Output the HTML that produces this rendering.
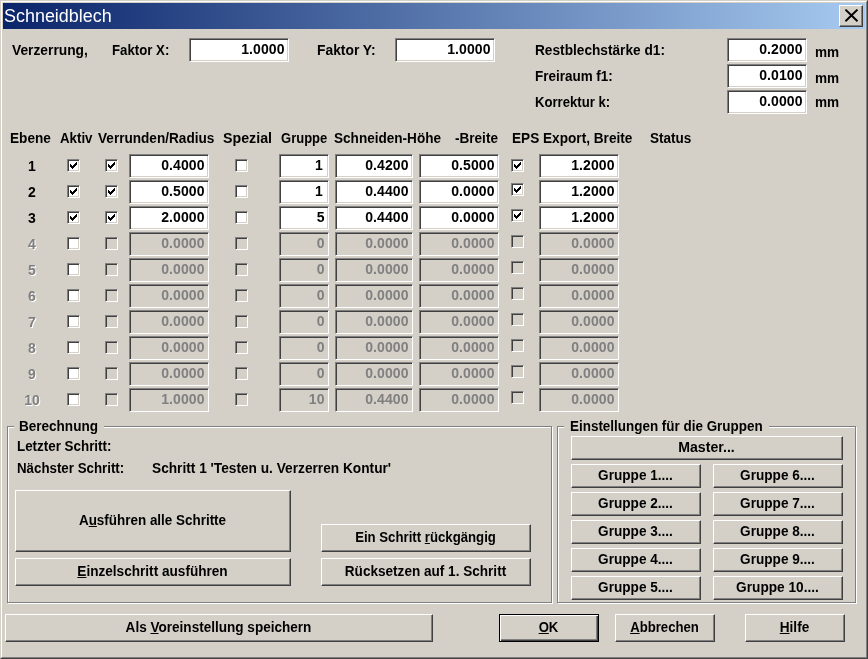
<!DOCTYPE html>
<html lang="de">
<head>
<meta charset="utf-8">
<title>Schneidblech</title>
<style>
html,body{margin:0;padding:0;}
body{width:868px;height:659px;overflow:hidden;background:#d4d0c8;position:relative;font-family:"Liberation Sans",sans-serif;font-weight:bold;font-size:14px;color:#000;}
#win{position:absolute;left:0;top:0;width:868px;height:659px;box-sizing:border-box;background:#d4d0c8;
 border-top:1px solid #d4d0c8;border-left:1px solid #d4d0c8;border-right:1px solid #404040;border-bottom:1px solid #404040;}
#win2{position:absolute;left:1px;top:1px;width:866px;height:657px;box-sizing:border-box;
 border-top:1px solid #fff;border-left:1px solid #fff;border-right:1px solid #808080;border-bottom:1px solid #808080;}
#fg{position:absolute;left:0;top:0;width:868px;height:659px;will-change:transform}
#title{position:absolute;left:3px;top:3px;width:862px;height:26px;background:linear-gradient(to right,#0a246a,#a6caf0);}
#title span{position:absolute;left:0.8px;top:2px;font-weight:normal;font-size:17.5px;line-height:22px;color:#fff;transform:scaleX(1.025);transform-origin:0 0}
#close{position:absolute;left:839px;top:5px;width:24px;height:22px;box-sizing:border-box;background:#d4d0c8;
 border-top:1px solid #fff;border-left:1px solid #fff;border-right:1px solid #404040;border-bottom:1px solid #404040;box-shadow:inset -1px -1px 0 #808080;}
#close svg{position:absolute;left:5px;top:3px}
.t{position:absolute;white-space:nowrap;line-height:16px;height:16px;transform-origin:0 0}
.num{text-align:center}
.dt{color:#808080;text-shadow:1px 1px 0 #fff}
.in{position:absolute;box-sizing:border-box;background:#fff;border-top:1px solid #808080;border-left:1px solid #808080;border-right:1px solid #fff;border-bottom:1px solid #fff;
 box-shadow:inset 1px 1px 0 #404040, inset -1px -1px 0 #d4d0c8;}
.in span{position:absolute;right:3.4px;top:2px;line-height:16px;letter-spacing:0.1px}
.in.dis{background:#d4d0c8}
.in.dis span{color:#808080}
.cb{position:absolute;width:13px;height:13px;box-sizing:border-box;background:#fff;border-top:1px solid #808080;border-left:1px solid #808080;border-right:1px solid #fff;border-bottom:1px solid #fff;
 box-shadow:inset 1px 1px 0 #404040, inset -1px -1px 0 #d4d0c8;}
.cb.dis{background:#d4d0c8}
.cb svg{position:absolute;left:2px;top:2px;overflow:visible}
.btn{position:absolute;box-sizing:border-box;background:#d4d0c8;border-top:1px solid #fff;border-left:1px solid #fff;border-right:1px solid #404040;border-bottom:1px solid #404040;
 box-shadow:inset -1px -1px 0 #808080;text-align:center;}
.btn span{position:absolute;left:-1px;right:0;top:50%;margin-top:-9px;line-height:16px;white-space:nowrap}
.btn.def{border:1px solid #000;box-shadow:inset 1px 1px 0 #fff, inset -1px -1px 0 #404040, inset -2px -2px 0 #808080}
.btn.def span{left:-2px;right:-1px}
.gb{position:absolute;box-sizing:border-box;border:1px solid #808080;box-shadow:inset 1px 1px 0 #fff, 1px 1px 0 #fff;}
.gap{position:absolute;height:2px;background:#d4d0c8}
u{text-decoration:underline;text-underline-offset:1px}
</style>
</head>
<body>
<div id="win"></div><div id="win2"></div>
<div id="fg">
<div id="title"><span>Schneidblech</span></div>
<div id="close"><svg width="14" height="14" viewBox="0 0 14 14"><path d="M0.4 0.6L12.5 12.2M12.5 0.6L0.4 12.2" stroke="#000" stroke-width="2" fill="none"/></svg></div>
<div class="t " style="left:12.01px;top:42px;transform:scaleX(0.9850)">Verzerrung,</div>
<div class="t " style="left:111.64px;top:42px;transform:scaleX(0.9444)">Faktor X:</div>
<div class="in" style="left:189px;top:38px;width:100px;height:24px"><span>1.0000</span></div>
<div class="t " style="left:316.51px;top:42px;transform:scaleX(0.9880)">Faktor Y:</div>
<div class="in" style="left:395px;top:38px;width:100px;height:24px"><span>1.0000</span></div>
<div class="t " style="left:534.52px;top:42px;transform:scaleX(0.9767)">Restblechstärke d1:</div>
<div class="t " style="left:534.53px;top:68px;transform:scaleX(0.9619)">Freiraum f1:</div>
<div class="t " style="left:534.55px;top:94px;transform:scaleX(0.9371)">Korrektur k:</div>
<div class="in" style="left:727px;top:38px;width:80px;height:24px"><span>0.2000</span></div>
<div class="in" style="left:727px;top:64px;width:80px;height:24px"><span>0.0100</span></div>
<div class="in" style="left:727px;top:90px;width:80px;height:24px"><span>0.0000</span></div>
<div class="t " style="left:814.62px;top:44px;transform:scaleX(0.9697)">mm</div>
<div class="t " style="left:814.62px;top:70px;transform:scaleX(0.9697)">mm</div>
<div class="t " style="left:814.62px;top:94px;transform:scaleX(0.9697)">mm</div>
<div class="t " style="left:10.22px;top:130px;transform:scaleX(0.9724)">Ebene</div>
<div class="t " style="left:59.64px;top:130px;transform:scaleX(0.9499)">Aktiv</div>
<div class="t " style="left:98.22px;top:130px;transform:scaleX(0.9711)">Verrunden/Radius</div>
<div class="t " style="left:222.69px;top:130px;transform:scaleX(1.0161)">Spezial</div>
<div class="t " style="left:280.56px;top:130px;transform:scaleX(0.9298)">Gruppe</div>
<div class="t " style="left:334.22px;top:130px;transform:scaleX(0.9691)">Schneiden-Höhe</div>
<div class="t " style="left:455.23px;top:130px;transform:scaleX(0.9682)">-Breite</div>
<div class="t " style="left:512.22px;top:130px;transform:scaleX(0.9729)">EPS Export, Breite</div>
<div class="t " style="left:650.33px;top:130px;transform:scaleX(0.9661)">Status</div>
<div class="t num" style="left:12px;width:40px;top:158px">1</div>
<div class="cb" style="left:67px;top:159px"><svg width="7" height="7" viewBox="0 0 7 7"><path shape-rendering="crispEdges" d="M0 2h1v3H0zM1 3h1v3H1zM2 4h1v3H2zM3 3h1v3H3zM4 2h1v3H4zM5 1h1v3H5zM6 0h1v3H6z" fill="#000"/></svg></div>
<div class="cb" style="left:105px;top:159px"><svg width="7" height="7" viewBox="0 0 7 7"><path shape-rendering="crispEdges" d="M0 2h1v3H0zM1 3h1v3H1zM2 4h1v3H2zM3 3h1v3H3zM4 2h1v3H4zM5 1h1v3H5zM6 0h1v3H6z" fill="#000"/></svg></div>
<div class="in" style="left:129px;top:154px;width:80px;height:24px"><span>0.4000</span></div>
<div class="cb" style="left:235px;top:159px"></div>
<div class="in" style="left:279px;top:154px;width:50px;height:24px"><span style="right:5px">1</span></div>
<div class="in" style="left:335px;top:154px;width:78px;height:24px"><span>0.4200</span></div>
<div class="in" style="left:419px;top:154px;width:80px;height:24px"><span>0.5000</span></div>
<div class="cb" style="left:511px;top:159px"><svg width="7" height="7" viewBox="0 0 7 7"><path shape-rendering="crispEdges" d="M0 2h1v3H0zM1 3h1v3H1zM2 4h1v3H2zM3 3h1v3H3zM4 2h1v3H4zM5 1h1v3H5zM6 0h1v3H6z" fill="#000"/></svg></div>
<div class="in" style="left:539px;top:154px;width:80px;height:24px"><span>1.2000</span></div>
<div class="t num" style="left:12px;width:40px;top:184px">2</div>
<div class="cb" style="left:67px;top:185px"><svg width="7" height="7" viewBox="0 0 7 7"><path shape-rendering="crispEdges" d="M0 2h1v3H0zM1 3h1v3H1zM2 4h1v3H2zM3 3h1v3H3zM4 2h1v3H4zM5 1h1v3H5zM6 0h1v3H6z" fill="#000"/></svg></div>
<div class="cb" style="left:105px;top:185px"><svg width="7" height="7" viewBox="0 0 7 7"><path shape-rendering="crispEdges" d="M0 2h1v3H0zM1 3h1v3H1zM2 4h1v3H2zM3 3h1v3H3zM4 2h1v3H4zM5 1h1v3H5zM6 0h1v3H6z" fill="#000"/></svg></div>
<div class="in" style="left:129px;top:180px;width:80px;height:24px"><span>0.5000</span></div>
<div class="cb" style="left:235px;top:185px"></div>
<div class="in" style="left:279px;top:180px;width:50px;height:24px"><span style="right:5px">1</span></div>
<div class="in" style="left:335px;top:180px;width:78px;height:24px"><span>0.4400</span></div>
<div class="in" style="left:419px;top:180px;width:80px;height:24px"><span>0.0000</span></div>
<div class="cb" style="left:511px;top:183px"><svg width="7" height="7" viewBox="0 0 7 7"><path shape-rendering="crispEdges" d="M0 2h1v3H0zM1 3h1v3H1zM2 4h1v3H2zM3 3h1v3H3zM4 2h1v3H4zM5 1h1v3H5zM6 0h1v3H6z" fill="#000"/></svg></div>
<div class="in" style="left:539px;top:180px;width:80px;height:24px"><span>1.2000</span></div>
<div class="t num" style="left:12px;width:40px;top:210px">3</div>
<div class="cb" style="left:67px;top:211px"><svg width="7" height="7" viewBox="0 0 7 7"><path shape-rendering="crispEdges" d="M0 2h1v3H0zM1 3h1v3H1zM2 4h1v3H2zM3 3h1v3H3zM4 2h1v3H4zM5 1h1v3H5zM6 0h1v3H6z" fill="#000"/></svg></div>
<div class="cb" style="left:105px;top:211px"><svg width="7" height="7" viewBox="0 0 7 7"><path shape-rendering="crispEdges" d="M0 2h1v3H0zM1 3h1v3H1zM2 4h1v3H2zM3 3h1v3H3zM4 2h1v3H4zM5 1h1v3H5zM6 0h1v3H6z" fill="#000"/></svg></div>
<div class="in" style="left:129px;top:206px;width:80px;height:24px"><span>2.0000</span></div>
<div class="cb" style="left:235px;top:211px"></div>
<div class="in" style="left:279px;top:206px;width:50px;height:24px"><span>5</span></div>
<div class="in" style="left:335px;top:206px;width:78px;height:24px"><span>0.4400</span></div>
<div class="in" style="left:419px;top:206px;width:80px;height:24px"><span>0.0000</span></div>
<div class="cb" style="left:511px;top:209px"><svg width="7" height="7" viewBox="0 0 7 7"><path shape-rendering="crispEdges" d="M0 2h1v3H0zM1 3h1v3H1zM2 4h1v3H2zM3 3h1v3H3zM4 2h1v3H4zM5 1h1v3H5zM6 0h1v3H6z" fill="#000"/></svg></div>
<div class="in" style="left:539px;top:206px;width:80px;height:24px"><span>1.2000</span></div>
<div class="t num dt" style="left:12px;width:40px;top:236px">4</div>
<div class="cb" style="left:67px;top:237px"></div>
<div class="cb dis" style="left:105px;top:237px"></div>
<div class="in dis" style="left:129px;top:232px;width:80px;height:24px"><span>0.0000</span></div>
<div class="cb dis" style="left:235px;top:237px"></div>
<div class="in dis" style="left:279px;top:232px;width:50px;height:24px"><span>0</span></div>
<div class="in dis" style="left:335px;top:232px;width:78px;height:24px"><span>0.0000</span></div>
<div class="in dis" style="left:419px;top:232px;width:80px;height:24px"><span>0.0000</span></div>
<div class="cb dis" style="left:511px;top:235px"></div>
<div class="in dis" style="left:539px;top:232px;width:80px;height:24px"><span>0.0000</span></div>
<div class="t num dt" style="left:12px;width:40px;top:262px">5</div>
<div class="cb" style="left:67px;top:263px"></div>
<div class="cb dis" style="left:105px;top:263px"></div>
<div class="in dis" style="left:129px;top:258px;width:80px;height:24px"><span>0.0000</span></div>
<div class="cb dis" style="left:235px;top:263px"></div>
<div class="in dis" style="left:279px;top:258px;width:50px;height:24px"><span>0</span></div>
<div class="in dis" style="left:335px;top:258px;width:78px;height:24px"><span>0.0000</span></div>
<div class="in dis" style="left:419px;top:258px;width:80px;height:24px"><span>0.0000</span></div>
<div class="cb dis" style="left:511px;top:261px"></div>
<div class="in dis" style="left:539px;top:258px;width:80px;height:24px"><span>0.0000</span></div>
<div class="t num dt" style="left:12px;width:40px;top:288px">6</div>
<div class="cb" style="left:67px;top:289px"></div>
<div class="cb dis" style="left:105px;top:289px"></div>
<div class="in dis" style="left:129px;top:284px;width:80px;height:24px"><span>0.0000</span></div>
<div class="cb dis" style="left:235px;top:289px"></div>
<div class="in dis" style="left:279px;top:284px;width:50px;height:24px"><span>0</span></div>
<div class="in dis" style="left:335px;top:284px;width:78px;height:24px"><span>0.0000</span></div>
<div class="in dis" style="left:419px;top:284px;width:80px;height:24px"><span>0.0000</span></div>
<div class="cb dis" style="left:511px;top:287px"></div>
<div class="in dis" style="left:539px;top:284px;width:80px;height:24px"><span>0.0000</span></div>
<div class="t num dt" style="left:12px;width:40px;top:314px">7</div>
<div class="cb" style="left:67px;top:315px"></div>
<div class="cb dis" style="left:105px;top:315px"></div>
<div class="in dis" style="left:129px;top:310px;width:80px;height:24px"><span>0.0000</span></div>
<div class="cb dis" style="left:235px;top:315px"></div>
<div class="in dis" style="left:279px;top:310px;width:50px;height:24px"><span>0</span></div>
<div class="in dis" style="left:335px;top:310px;width:78px;height:24px"><span>0.0000</span></div>
<div class="in dis" style="left:419px;top:310px;width:80px;height:24px"><span>0.0000</span></div>
<div class="cb dis" style="left:511px;top:313px"></div>
<div class="in dis" style="left:539px;top:310px;width:80px;height:24px"><span>0.0000</span></div>
<div class="t num dt" style="left:12px;width:40px;top:340px">8</div>
<div class="cb" style="left:67px;top:341px"></div>
<div class="cb dis" style="left:105px;top:341px"></div>
<div class="in dis" style="left:129px;top:336px;width:80px;height:24px"><span>0.0000</span></div>
<div class="cb dis" style="left:235px;top:341px"></div>
<div class="in dis" style="left:279px;top:336px;width:50px;height:24px"><span>0</span></div>
<div class="in dis" style="left:335px;top:336px;width:78px;height:24px"><span>0.0000</span></div>
<div class="in dis" style="left:419px;top:336px;width:80px;height:24px"><span>0.0000</span></div>
<div class="cb dis" style="left:511px;top:339px"></div>
<div class="in dis" style="left:539px;top:336px;width:80px;height:24px"><span>0.0000</span></div>
<div class="t num dt" style="left:12px;width:40px;top:366px">9</div>
<div class="cb" style="left:67px;top:367px"></div>
<div class="cb dis" style="left:105px;top:367px"></div>
<div class="in dis" style="left:129px;top:362px;width:80px;height:24px"><span>0.0000</span></div>
<div class="cb dis" style="left:235px;top:367px"></div>
<div class="in dis" style="left:279px;top:362px;width:50px;height:24px"><span>0</span></div>
<div class="in dis" style="left:335px;top:362px;width:78px;height:24px"><span>0.0000</span></div>
<div class="in dis" style="left:419px;top:362px;width:80px;height:24px"><span>0.0000</span></div>
<div class="cb dis" style="left:511px;top:365px"></div>
<div class="in dis" style="left:539px;top:362px;width:80px;height:24px"><span>0.0000</span></div>
<div class="t num dt" style="left:12px;width:40px;top:392px">10</div>
<div class="cb" style="left:67px;top:393px"></div>
<div class="cb dis" style="left:105px;top:393px"></div>
<div class="in dis" style="left:129px;top:388px;width:80px;height:24px"><span>1.0000</span></div>
<div class="cb dis" style="left:235px;top:393px"></div>
<div class="in dis" style="left:279px;top:388px;width:50px;height:24px"><span>10</span></div>
<div class="in dis" style="left:335px;top:388px;width:78px;height:24px"><span>0.4400</span></div>
<div class="in dis" style="left:419px;top:388px;width:80px;height:24px"><span>0.0000</span></div>
<div class="cb dis" style="left:511px;top:391px"></div>
<div class="in dis" style="left:539px;top:388px;width:80px;height:24px"><span>0.0000</span></div>
<div class="gb" style="left:7px;top:426px;width:545px;height:177px"></div>
<div class="gap" style="left:14px;top:426px;width:90px"></div>
<div class="gb" style="left:557px;top:426px;width:299px;height:177px"></div>
<div class="gap" style="left:564px;top:426px;width:205px"></div>
<div class="t " style="left:19.33px;top:418px;transform:scaleX(0.9664)">Berechnung</div>
<div class="t " style="left:569.93px;top:418px;transform:scaleX(0.9599)">Einstellungen für die Gruppen</div>
<div class="t " style="left:16.54px;top:438px;transform:scaleX(0.9558)">Letzter Schritt:</div>
<div class="t " style="left:16.54px;top:460px;transform:scaleX(0.9504)">Nächster Schritt:</div>
<div class="t " style="left:152.32px;top:460px;transform:scaleX(0.9780)">Schritt 1 &#x27;Testen u. Verzerren Kontur&#x27;</div>
<div class="btn" style="left:15px;top:490px;width:276px;height:62px"><span style="transform:scaleX(0.9600)">A<u>u</u>sführen alle Schritte</span></div>
<div class="btn" style="left:15px;top:558px;width:276px;height:28px"><span style="transform:scaleX(0.9712)"><u>E</u>inzelschritt ausführen</span></div>
<div class="btn" style="left:321px;top:524px;width:210px;height:28px"><span style="transform:scaleX(0.9421)">Ein Schritt <u>r</u>ückgängig</span></div>
<div class="btn" style="left:321px;top:558px;width:210px;height:28px"><span style="transform:scaleX(0.9691)">Rücksetzen auf 1. Schritt</span></div>
<div class="btn" style="left:571px;top:436px;width:272px;height:24px"><span style="transform:scaleX(1.0086)">Master...</span></div>
<div class="btn" style="left:571px;top:464px;width:130px;height:24px"><span style="transform:scaleX(0.9706)">Gruppe 1....</span></div>
<div class="btn" style="left:713px;top:464px;width:130px;height:24px"><span style="transform:scaleX(0.9706)">Gruppe 6....</span></div>
<div class="btn" style="left:571px;top:492px;width:130px;height:24px"><span style="transform:scaleX(0.9706)">Gruppe 2....</span></div>
<div class="btn" style="left:713px;top:492px;width:130px;height:24px"><span style="transform:scaleX(0.9706)">Gruppe 7....</span></div>
<div class="btn" style="left:571px;top:520px;width:130px;height:24px"><span style="transform:scaleX(0.9706)">Gruppe 3....</span></div>
<div class="btn" style="left:713px;top:520px;width:130px;height:24px"><span style="transform:scaleX(0.9706)">Gruppe 8....</span></div>
<div class="btn" style="left:571px;top:548px;width:130px;height:24px"><span style="transform:scaleX(0.9706)">Gruppe 4....</span></div>
<div class="btn" style="left:713px;top:548px;width:130px;height:24px"><span style="transform:scaleX(0.9706)">Gruppe 9....</span></div>
<div class="btn" style="left:571px;top:576px;width:130px;height:24px"><span style="transform:scaleX(0.9706)">Gruppe 5....</span></div>
<div class="btn" style="left:713px;top:576px;width:130px;height:24px"><span style="transform:scaleX(0.9758)">Gruppe 10....</span></div>
<div class="btn" style="left:5px;top:614px;width:428px;height:28px"><span style="transform:scaleX(0.9679)">Als <u>V</u>oreinstellung speichern</span></div>
<div class="btn def" style="left:499px;top:614px;width:100px;height:28px"><span style="transform:scaleX(0.9381)"><u>O</u>K</span></div>
<div class="btn" style="left:615px;top:614px;width:100px;height:28px"><span style="transform:scaleX(0.9395)"><u>A</u>bbrechen</span></div>
<div class="btn" style="left:745px;top:614px;width:100px;height:28px"><span style="transform:scaleX(0.9706)"><u>H</u>ilfe</span></div>
</div>
</body>
</html>
